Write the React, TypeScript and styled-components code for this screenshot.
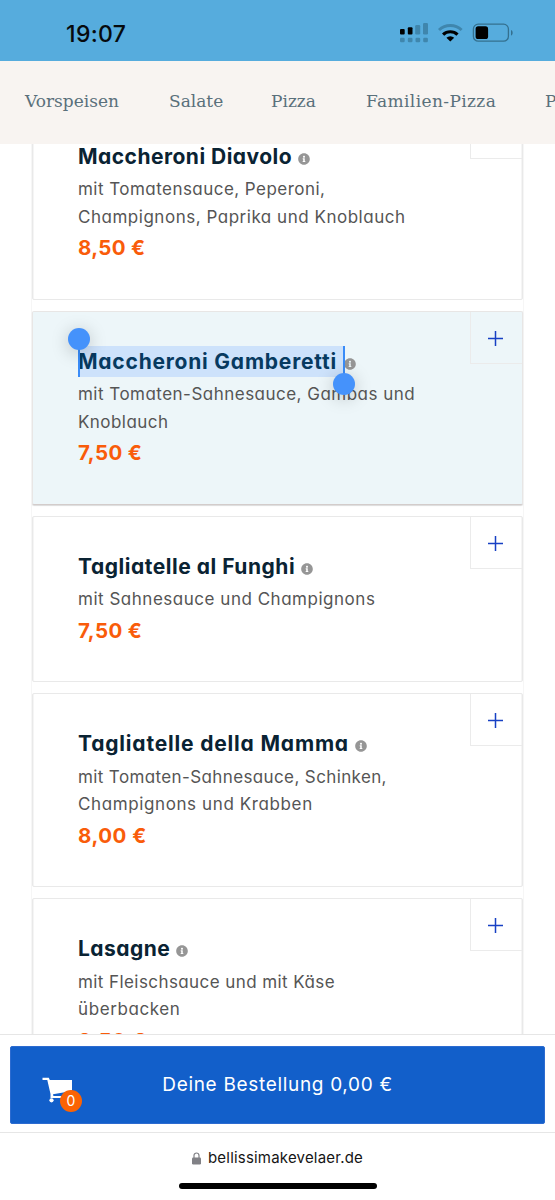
import React from "react";
import styled, { createGlobalStyle, css } from "styled-components";
import { FaInfoCircle } from "react-icons/fa";

const Global = createGlobalStyle`
  * { box-sizing: border-box; }
  body { margin: 0; background: #fff; overflow: hidden; }
`;

const sans = `Inter, Lato, sans-serif`;
const system = `Inter, Roboto, sans-serif`;

const Screen = styled.div`
  width: 555px;
  height: 1200px;
  display: flex;
  flex-direction: column;
  background: #fff;
  font-family: ${sans};
  overflow: hidden;
`;

const StatusBar = styled.header`
  flex: none;
  height: 61px;
  padding: 6px 41px 0 66px;
  display: flex;
  align-items: center;
  justify-content: space-between;
  background: #56acdd;
`;

const Clock = styled.span`
  font: 500 23px/28px ${system};
  letter-spacing: 0.35px;
  color: #060a0d;
`;

const StatusIcons = styled.svg`
  display: block;
  width: 115px;
  height: 22px;
  margin-bottom: 2px;
`;

const CategoryNav = styled.nav`
  flex: none;
  height: 83px;
  padding: 0 0 4px 25px;
  display: flex;
  align-items: center;
  overflow: hidden;
  background: #f8f4f1;
`;

const Category = styled.span<{ $width: number; $spacing?: number }>`
  flex: none;
  width: ${(p) => p.$width}px;
  white-space: nowrap;
  font: 400 17px/24px "DejaVu Serif", serif;
  letter-spacing: ${(p) => p.$spacing ?? 0}px;
  color: #5a707b;
`;

const MenuViewport = styled.main`
  flex: none;
  height: 890px;
  padding: 0 31px;
  overflow: hidden;
`;

const MenuList = styled.div`
  margin-top: -38.4px;
  display: flex;
  flex-direction: column;
  gap: 11px;
  border: solid #f6f6f6;
  border-width: 0 1px;
`;

const Card = styled.article<{ $height: number; $active?: boolean }>`
  flex: none;
  position: relative;
  height: ${(p) => p.$height}px;
  padding: 34px 44px 0 45px;
  border: 1px solid #e9e9e9;
  border-radius: 2px;
  background: #fff;
  box-shadow: inset 1px 0 #f5f5f5, inset -1px 0 #f5f5f5;
  ${(p) =>
    p.$active &&
    css`
      background: #edf6f9;
      border-color: #e8e6e5;
      border-bottom-color: #d3cccb;
      box-shadow: 0 1px 1px rgba(0, 0, 0, 0.14);
    `}
`;

const AddButton = styled.button`
  position: absolute;
  top: 0;
  right: 0;
  width: 52px;
  height: 52px;
  padding: 2px 0 0;
  display: grid;
  place-items: center;
  border: solid #ebebeb;
  border-width: 0 0 1px 1px;
  background: transparent;

  svg {
    margin-right: 2px;
  }
`;

const TitleRow = styled.div`
  display: flex;
  align-items: center;
  height: 31px;
`;

const Title = styled.h2<{ $spacing: number; $selected?: boolean }>`
  position: relative;
  margin: 0;
  font-weight: 700;
  font-size: 21px;
  font-feature-settings: "cv11";
  line-height: 31px;
  letter-spacing: ${(p) => p.$spacing}px;
  white-space: nowrap;
  color: #0a2333;
  ${(p) =>
    p.$selected &&
    css`
      width: 266px;
      background: #cde2fb;
      color: #073a60;
    `}
`;

const Info = styled(FaInfoCircle)<{ $gap: number }>`
  margin: 5px 0 0 ${(p) => p.$gap}px;
  width: 12px;
  height: 12px;
  color: #969696;
`;

const Handle = styled.i<{ $end?: boolean }>`
  position: absolute;
  z-index: 1;
  top: 0;
  ${(p) => (p.$end ? "right: -1px;" : "left: 0;")}
  width: 2px;
  height: 31px;
  background: #3a8cf8;
  &::after {
    content: "";
    position: absolute;
    left: -10px;
    ${(p) => (p.$end ? "top: 27px;" : "top: -18px;")}
    width: 22px;
    height: 22px;
    border-radius: 50%;
    background: #4592fb;
    box-shadow: 0 3px 18px rgba(0, 0, 0, 0.22);
  }
`;

const Line = styled.p<{ $spacing: number }>`
  margin: 0;
  font-size: 17px;
  font-weight: 400;
  font-feature-settings: "cv11";
  line-height: 27.3px;
  letter-spacing: ${(p) => p.$spacing}px;
  white-space: nowrap;
  color: #555;
`;

const Description = styled.div`
  padding: 4.6px 0 2.7px;
`;

const Price = styled.div<{ $spacing: number }>`
  font-weight: 700;
  font-size: 20.5px;
  line-height: 29px;
  letter-spacing: ${(p) => p.$spacing}px;
  color: #f95c0a;
`;

const OrderBar = styled.section`
  flex: none;
  height: 99px;
  padding: 11px 10px 0;
  border: solid #e6e6e6;
  border-width: 1px 0;
  background: #fff;
`;

const OrderButton = styled.button`
  position: relative;
  width: 535px;
  height: 78px;
  padding: 0;
  border: 1px solid #2c6bd0;
  border-radius: 2px;
  background: #125fca;
  color: #fff;
  font: 400 19px/30px ${sans};
  font-feature-settings: "cv11";
  letter-spacing: 0.68px;
`;

const CartIcon = styled.svg`
  position: absolute;
  left: 31px;
  top: 29px;
  width: 32px;
  height: 28px;
`;

const Badge = styled.span`
  position: absolute;
  left: 49px;
  top: 43px;
  width: 22px;
  height: 22px;
  border-radius: 50%;
  background: #fb6304;
  font: 400 14px/22px ${sans};
  letter-spacing: 0;
`;

const BrowserBar = styled.footer`
  flex: 1;
  display: flex;
  flex-direction: column;
  align-items: center;
`;

const Address = styled.div`
  margin-top: 14px;
  display: flex;
  align-items: center;
  gap: 7px;
  font: 400 15px/22px ${system};
  letter-spacing: 0.2px;
  color: #151515;
`;

const HomeIndicator = styled.div`
  margin-top: 14px;
  width: 198px;
  height: 6px;
  border-radius: 3px;
  background: #000;
`;

type Text = { text: string; spacing: number };
type Dish = {
  name: Text;
  lines: Text[];
  price: Text;
  height: number;
  gap: number;
  selected?: boolean;
};

const dishes: Dish[] = [
  {
    name: { text: "Maccheroni Diavolo", spacing: 0.48 },
    lines: [
      { text: "mit Tomatensauce, Peperoni,", spacing: 0.46 },
      { text: "Champignons, Paprika und Knoblauch", spacing: 0.52 },
    ],
    price: { text: "8,50 €", spacing: 0.3 },
    height: 194,
    gap: 6,
  },
  {
    name: { text: "Maccheroni Gamberetti", spacing: 0.78 },
    lines: [
      { text: "mit Tomaten-Sahnesauce, Gambas und", spacing: 0.48 },
      { text: "Knoblauch", spacing: 0.45 },
    ],
    price: { text: "7,50 €", spacing: 0.4 },
    height: 194,
    gap: 0,
    selected: true,
  },
  {
    name: { text: "Tagliatelle al Funghi", spacing: 0.53 },
    lines: [{ text: "mit Sahnesauce und Champignons", spacing: 0.52 }],
    price: { text: "7,50 €", spacing: 0.4 },
    height: 166.5,
    gap: 6,
  },
  {
    name: { text: "Tagliatelle della Mamma", spacing: 0.82 },
    lines: [
      { text: "mit Tomaten-Sahnesauce, Schinken,", spacing: 0.38 },
      { text: "Champignons und Krabben", spacing: 0.61 },
    ],
    price: { text: "8,00 €", spacing: 0.5 },
    height: 194,
    gap: 6,
  },
  {
    name: { text: "Lasagne", spacing: 0.45 },
    lines: [
      { text: "mit Fleischsauce und mit Käse", spacing: 0.42 },
      { text: "überbacken", spacing: 0.6 },
    ],
    price: { text: "8,50 €", spacing: 0.4 },
    height: 194,
    gap: 6,
  },
];

const DishCard = ({ dish }: { dish: Dish }) => (
  <Card $height={dish.height} $active={dish.selected}>
    <TitleRow>
      <Title $spacing={dish.name.spacing} $selected={dish.selected}>
        {dish.name.text}
        {dish.selected && (
          <>
            <Handle />
            <Handle $end />
          </>
        )}
      </Title>
      <Info $gap={dish.gap} />
    </TitleRow>
    <Description>
      {dish.lines.map((l) => (
        <Line key={l.text} $spacing={l.spacing}>
          {l.text}
        </Line>
      ))}
    </Description>
    <Price $spacing={dish.price.spacing}>{dish.price.text}</Price>
    <AddButton aria-label="Hinzufügen">
      <svg width="15" height="15" viewBox="0 0 15 15" stroke="#1740c4" strokeWidth="1.5">
        <path d="M7.5 0v15M0 7.5h15" />
      </svg>
    </AddButton>
  </Card>
);

export default function App() {
  return (
    <Screen>
      <Global />
      <StatusBar>
        <Clock>19:07</Clock>
        <StatusIcons viewBox="399 22 115 22">
          <g fill="#3f86ad">
            <rect x="415.2" y="25" width="5" height="9.5" rx="1.3" />
            <rect x="423" y="23" width="5" height="11.5" rx="1.3" />
            <rect x="400" y="37.7" width="4.7" height="4.5" rx="1.2" />
            <rect x="407.8" y="37.7" width="4.7" height="4.5" rx="1.2" />
            <rect x="415.5" y="37.7" width="4.7" height="4.5" rx="1.2" />
            <rect x="423.2" y="37.7" width="4.7" height="4.5" rx="1.2" />
          </g>
          <rect x="400" y="29" width="4.7" height="5.5" rx="1" />
          <rect x="407.8" y="27.3" width="4.7" height="7.2" rx="1" />
          <path d="M439 30a16.5 16.5 0 0 1 22.6 0" fill="none" stroke="#3f86ad" strokeWidth="3" />
          <path d="M443.1 34.6a10.5 10.5 0 0 1 14.4 0" fill="none" stroke="#000" strokeWidth="3.2" />
          <path d="M446.4 37.8a5.7 5.7 0 0 1 7.8 0L450.3 41.5z" />
          <rect x="473.4" y="24.2" width="35" height="17" rx="4.8" fill="none" stroke="#34708f" strokeWidth="1.3" />
          <rect x="475.6" y="26.3" width="12.5" height="12.8" rx="2.6" />
          <path d="M511 30v5.6c2.200-.8 2.200-4.800 0-5.600z" fill="#34708f" />
        </StatusIcons>
      </StatusBar>
      <CategoryNav>
        <Category $width={144}>Vorspeisen</Category>
        <Category $width={102}>Salate</Category>
        <Category $width={95}>Pizza</Category>
        <Category $width={179} $spacing={0.38}>Familien-Pizza</Category>
        <Category $width={60}>Pasta</Category>
      </CategoryNav>
      <MenuViewport>
        <MenuList>
          {dishes.map((d) => (
            <DishCard key={d.name.text} dish={d} />
          ))}
        </MenuList>
      </MenuViewport>
      <OrderBar>
        <OrderButton>
          Deine Bestellung 0,00 €
          <CartIcon viewBox="41 1076 32 28" fill="#fff">
            <path d="M41.5 1077.800h6.300l1 2.200h22.200v11l-19 3.200.4 1.700h18.600v2.200H49.500v-4l-3.200-14.100h-4.800z" />
            <circle cx="50.500" cy="1100.300" r="2.100" />
          </CartIcon>
          <Badge>0</Badge>
        </OrderButton>
      </OrderBar>
      <BrowserBar>
        <Address>
          <svg width="9" height="13" viewBox="0 0 9 13">
            <rect y="5.500" width="9" height="7" rx="1.200" fill="#818186" />
            <path d="M2 6V3.500a2.500 2.500 0 0 1 5 0V6" fill="none" stroke="#818186" strokeWidth="1.200" />
          </svg>
          bellissimakevelaer.de
        </Address>
        <HomeIndicator />
      </BrowserBar>
    </Screen>
  );
}
